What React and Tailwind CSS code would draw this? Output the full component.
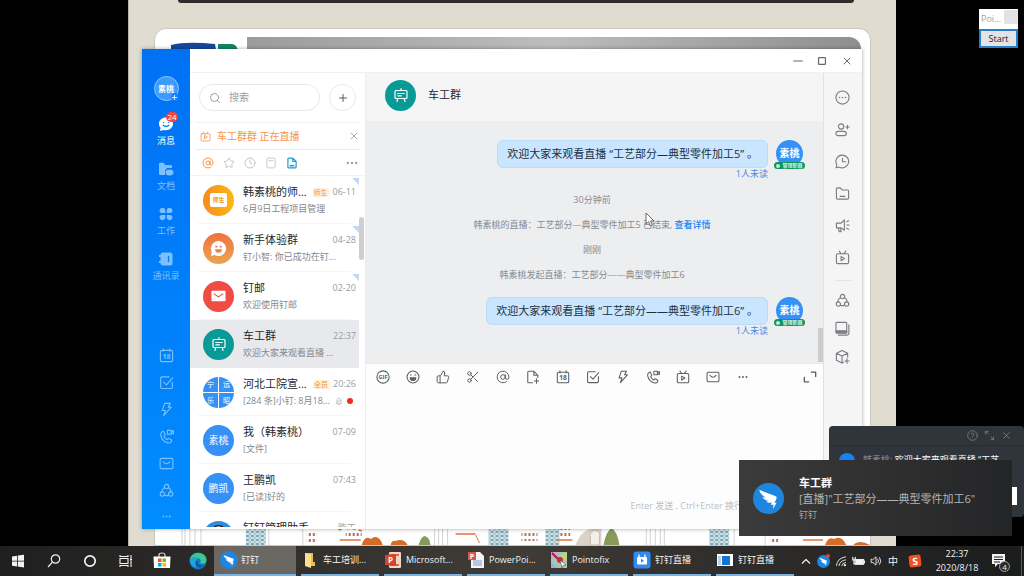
import { useState } from 'react'
import { AtSign, Clock, Ellipsis, Plus, Scissors, Search, Star, ThumbsUp, X } from 'lucide-react'

/**
 * Line icon on a 16 unit grid, drawn in the current text colour.
 */
function Glyph({ className = 'size-[14px]', children }) {
  return (
    <svg
      viewBox="0 0 16 16"
      className={className}
      fill="none"
      stroke="currentColor"
      strokeWidth="1.2"
      strokeLinecap="round"
      strokeLinejoin="round"
      aria-hidden="true"
    >
      {children}
    </svg>
  )
}

const LiveIcon = ({ className }) => (
  <Glyph className={className}>
    <rect x="1.5" y="4" width="13" height="10.5" rx="1.5" />
    <path d="M4.5 1.2 6.5 4M11.5 1.2 9.5 4M6.5 7v4.5L10.2 9.2z" />
  </Glyph>
)

const CalendarIcon = ({ className }) => (
  <Glyph className={className}>
    <rect x="1.5" y="2.5" width="13" height="12" rx="1.5" />
    <path d="M4.5 1v2.5M11.5 1v2.5" />
    <text x="8" y="11.6" fontSize="7.5" textAnchor="middle" fill="currentColor" stroke="none" fontWeight="700">
      18
    </text>
  </Glyph>
)

const CheckIcon = ({ className }) => (
  <Glyph className={className}>
    <path d="M10.5 2H3a1.2 1.2 0 0 0-1.2 1.2v10A1.2 1.2 0 0 0 3 14.4h10a1.2 1.2 0 0 0 1.2-1.2V7.5" />
    <path d="M5 7.5 8 10.5 14.5 3" />
  </Glyph>
)

const BoltIcon = ({ className }) => (
  <Glyph className={className}>
    <path d="M6 1.5h6L9.8 5.5H13L5 14.5l1.8-5.500H3.500z" />
  </Glyph>
)

const PhoneIcon = ({ className }) => (
  <Glyph className={className}>
    <path d="M4 2.500c-1.500.7-2.500 2.200-2 4.500 1 4.300 4.500 7 7.500 7.800 2 .4 3.500-.6 4-2 .2-.6 0-1-.5-1.300l-2-1.200c-.6-.3-1-.1-1.400.3l-.7.8C7 10.500 5.800 9 5.300 7.600l.8-.8c.4-.4.5-.9.2-1.400L5.200 3C4.900 2.500 4.500 2.300 4 2.500z" />
    <path d="M9 1.500h4v4H9zM13 3l2.300-1.200v3.400L13 4" />
  </Glyph>
)

const MailIcon = ({ className }) => (
  <Glyph className={className}>
    <rect x="1.2" y="2.5" width="13.6" height="11" rx="1.5" />
    <path d="M4.500 6.200Q8 10.200 11.500 6.200" />
  </Glyph>
)

const TrioIcon = ({ className }) => (
  <Glyph className={className}>
    <circle cx="8" cy="3.8" r="2.3" />
    <circle cx="3.6" cy="11.8" r="2.3" />
    <circle cx="12.4" cy="11.8" r="2.3" />
    <path d="M5.600 5C3.800 6 3 7.500 3 9.300M10.400 5c1.800 1 2.600 2.500 2.600 4.300M6 13q2 1 4 0" />
  </Glyph>
)

const DotsIcon = ({ className }) => (
  <svg viewBox="0 0 16 16" className={className} fill="currentColor" aria-hidden="true">
    <circle cx="4" cy="8" r="1.1" />
    <circle cx="8" cy="8" r="1.1" />
    <circle cx="12" cy="8" r="1.1" />
  </svg>
)

const GifIcon = ({ className }) => (
  <Glyph className={className}>
    <circle cx="8" cy="8" r="7" />
    <text x="8" y="10.4" fontSize="6.5" textAnchor="middle" fill="currentColor" stroke="none" fontWeight="700">
      GIF
    </text>
  </Glyph>
)

const LaughIcon = ({ className }) => (
  <Glyph className={className}>
    <circle cx="8" cy="8" r="6.8" />
    <path d="M4.800 8.800h6.400a3.200 3.200 0 0 1-6.400 0z" fill="currentColor" />
    <path d="M5.500 5.200v.8M10.500 5.200v.8" />
  </Glyph>
)

const FileAddIcon = ({ className }) => (
  <Glyph className={className}>
    <path d="M7.500 14.500H3.200A1.200 1.200 0 0 1 2 13.300V2.700a1.200 1.200 0 0 1 1.200-1.200H9L13.500 6v2.500M9 1.500V6h4.500M12 10v5M9.500 12.500h5" />
  </Glyph>
)

const CardIcon = ({ className }) => (
  <Glyph className={className}>
    <rect x="2.5" y="1.5" width="11" height="13" rx="1.5" />
    <path d="M5 5h6" />
  </Glyph>
)

const DocIcon = ({ className }) => (
  <Glyph className={className}>
    <path d="M2.500 2.700a1.200 1.200 0 0 1 1.200-1.200H9L13.500 6v7.300a1.200 1.200 0 0 1-1.200 1.200H3.700a1.200 1.200 0 0 1-1.200-1.200zM9 1.500V6h4.500" strokeWidth="1.6" />
    <path d="M5.500 11.500h5" strokeWidth="2" />
  </Glyph>
)

const MuteIcon = ({ className }) => (
  <Glyph className={className}>
    <path d="M4 11V6.500a4 4 0 0 1 8 0V11l1.500 1.500h-11zM6.500 15h3M5 8h6" strokeWidth="1.600" />
  </Glyph>
)

const ExpandIcon = ({ className }) => (
  <Glyph className={className}>
    <path d="M9.500 2.500h5v5M1.500 8.500v5h5" strokeWidth="1.500" />
  </Glyph>
)

const EaselIcon = ({ className }) => (
  <Glyph className={className}>
    <rect x="2" y="3.5" width="12" height="8" rx="1" />
    <path d="M8 1.500v2M4.800 6.500h6.400M4.800 8.800h3.500M4.800 11.500 4 14.500M11.200 11.500l.8 3" />
  </Glyph>
)

const BirdIcon = ({ className }) => (
  <svg viewBox="0 0 32 32" className={className} aria-hidden="true">
    <circle cx="16" cy="16" r="16" fill="#1f86e0" />
    <path
      d="M6.500 7c5 2.500 11 4 16.500 6.500 1.700.8 1.700 2 .8 3.700l-1.800 3.300h2.300L20.500 27l.7-4.500h-3l1.200-2.300c-2.400.4-4.400.1-6-1.200 1.200.1 2.200 0 3-.3-3.300-.7-5.500-2-6.800-4.200 1.200.4 2.500.6 3.600.5C9.500 13 7 10.300 6.500 7z"
      fill="#fff"
    />
  </svg>
)

const navItems = [
  { label: '消息', icon: 'chat', active: true },
  { label: '文档', icon: 'docs' },
  { label: '工作', icon: 'work' },
  { label: '通讯录', icon: 'book' },
]

const railTools = [
  { label: '日历', Icon: CalendarIcon },
  { label: '待办', Icon: CheckIcon },
  { label: 'DING', Icon: BoltIcon },
  { label: '电话', Icon: PhoneIcon },
  { label: '邮箱', Icon: MailIcon },
  { label: '圈子', Icon: TrioIcon },
]

const conversations = [
  { id: 1, name: '韩素桃的师...', tag: '师生', time: '06-11', text: '6月9日工程项目管理', avatar: 'class', corner: true },
  { id: 2, name: '新手体验群', time: '04-28', text: '钉小智: 你已成功在钉...', avatar: 'smile', corner: true },
  { id: 3, name: '钉邮', time: '02-20', text: '欢迎使用钉邮', avatar: 'mail', corner: true },
  { id: 4, name: '车工群', time: '22:37', text: '欢迎大家来观看直播 ...', avatar: 'easel' },
  { id: 5, name: '河北工院宣...', tag: '全员', time: '20:26', text: '[284 条]小钉: 8月18...', avatar: 'grid', unread: true },
  { id: 6, name: '我（韩素桃）', time: '07-09', text: '[文件]', avatar: '素桃' },
  { id: 7, name: '王鹏凯', time: '07:43', text: '[已读]好的', avatar: '鹏凯' },
  { id: 8, name: '钉钉管理助手', time: '昨天', text: '', avatar: 'helper' },
]

const editorTools = [
  { label: 'GIF表情', Icon: GifIcon },
  { label: '表情', Icon: LaughIcon },
  { label: '点赞', Icon: ThumbsUp },
  { label: '截图', Icon: Scissors },
  { label: '提及', Icon: AtSign },
  { label: '文件', Icon: FileAddIcon },
  { label: '日程', Icon: CalendarIcon },
  { label: '任务', Icon: CheckIcon },
  { label: 'DING', Icon: BoltIcon },
  { label: '通话', Icon: PhoneIcon },
  { label: '直播', Icon: LiveIcon },
  { label: '邮件', Icon: MailIcon },
  { label: '更多', Icon: DotsIcon },
]

const tasks = [
  { id: 'ding', label: '钉钉', icon: 'ding', active: true },
  { id: 'folder', label: '车工培训...', icon: 'folder' },
  { id: 'ppt', label: 'Microsoft...', icon: 'ppt' },
  { id: 'ppt2', label: 'PowerPoi...', icon: 'ppt2' },
  { id: 'pointofix', label: 'Pointofix', icon: 'pointofix' },
  { id: 'live', label: '钉钉直播', icon: 'live' },
  { id: 'live2', label: '钉钉直播', icon: 'window' },
]

function NavIcon({ name }) {
  return (
    <svg viewBox="0 0 16 16" className="size-4" fill="currentColor" aria-hidden="true">
      {name === 'chat' && (
        <>
          <path d="M8 1.500c4 0 7 2.700 7 6.300s-3 6.400-7 6.400c-.8 0-1.600-.1-2.300-.3L2 15l.6-3A6 6 0 0 1 1 7.800C1 4.200 4 1.500 8 1.500z" />
          <path d="M4.800 9q3.200 2.800 6.400 0" fill="none" stroke="#007bfb" strokeWidth="1.200" />
          <path d="M5.500 6v1M10.500 6v1" stroke="#007bfb" strokeWidth="1.200" />
        </>
      )}
      {name === 'docs' && (
        <>
          <path d="M1 3a1.300 1.300 0 0 1 1.300-1.300h3.200L7.300 4h5.400A1.300 1.300 0 0 1 14 5.300V7H9L7 9.500V14H2.300A1.300 1.300 0 0 1 1 12.700z" />
          <ellipse cx="11.500" cy="11.500" rx="4" ry="3" />
        </>
      )}
      {name === 'work' && (
        <>
          <path d="M1.500 4.200a3 3 0 0 1 5.800-.2v3H4.500a2.800 2.800 0 0 1-3-2.800zM14.500 4.200a3 3 0 0 0-5.800-.2v3h2.800a2.800 2.800 0 0 0 3-2.800z" />
          <path d="M1.500 11.800a3 3 0 0 0 5.800.2V9H4.500a2.800 2.800 0 0 0-3 2.800zM14.500 11.800a3 3 0 0 1-5.800.2V9h2.800a2.800 2.800 0 0 1 3 2.800z" />
        </>
      )}
      {name === 'book' && (
        <>
          <rect x="2.5" y="1.5" width="12" height="13" rx="2.5" />
          <path d="M1 5h3M1 11h3" stroke="currentColor" strokeWidth="1.800" />
          <path d="M10.500 5v6" stroke="#007bfb" strokeWidth="1.300" />
        </>
      )}
    </svg>
  )
}

function SideRail() {
  return (
    <nav className="flex w-12 shrink-0 flex-col items-center bg-gradient-to-b from-[#0071f5] to-[#008cff] pt-[27px] pb-[6px] text-[#7cc0ff]">
      <div className="relative flex size-[25px] items-center justify-center rounded-full border border-[#8cc6ff] bg-[#3c9bfb] text-[8px] font-bold text-white">
        素桃
        <span className="absolute -right-px -bottom-px flex size-2 items-center justify-center rounded-full bg-[#1683f8]">
          <Plus className="size-[7px]" strokeWidth={3} />
        </span>
      </div>
      <div className="mt-[15px] flex flex-col gap-[14px]">
        {navItems.map((item) => (
          <button
            key={item.label}
            type="button"
            className={
              item.active
                ? 'relative flex flex-col items-center gap-[3px] text-white'
                : 'relative flex flex-col items-center gap-[3px]'
            }
          >
            <NavIcon name={item.icon} />
            <span className="text-[9px] leading-[12px]">{item.label}</span>
            {item.active && (
              <span className="absolute -top-1 left-[14px] rounded-full bg-[#f4473c] px-px text-[8px] leading-[10px]">
                24
              </span>
            )}
          </button>
        ))}
      </div>
      <div className="mt-auto flex flex-col items-center gap-3">
        {railTools.map(({ label, Icon }) => (
          <button key={label} type="button" aria-label={label}>
            <Icon className="size-[15px]" />
          </button>
        ))}
        <button type="button" aria-label="更多">
          <DotsIcon className="size-[13px]" />
        </button>
      </div>
    </nav>
  )
}

function Avatar({ kind }) {
  const base = 'flex size-[31px] shrink-0 items-center justify-center overflow-hidden rounded-full text-white'

  if (kind === 'class') {
    return (
      <div className={`${base} bg-gradient-to-r from-[#f88a1c] to-[#fbb813]`}>
        <span className="rounded-[2px] bg-white px-[2px] text-[6px] leading-[14px] font-bold text-[#f59a1c]">师生</span>
      </div>
    )
  }
  if (kind === 'smile') {
    return (
      <div className={`${base} bg-gradient-to-b from-[#f2703d] to-[#e8a552]`}>
        <svg viewBox="0 0 16 16" className="size-[17px]" aria-hidden="true">
          <path d="M8 1a7 7 0 1 1-3.500 13L1 15l.6-4A7 7 0 0 1 8 1z" fill="#fff" />
          <path d="M4.800 8.800h6.400a3.200 3.200 0 0 1-6.400 0zM5 5.500h2v1.500H5zM9 5.500h2v1.500H9z" fill="#ee8047" />
        </svg>
      </div>
    )
  }
  if (kind === 'mail') {
    return (
      <div className={`${base} bg-[#f14c43]`}>
        <svg viewBox="0 0 16 12" className="h-3 w-[15px]" aria-hidden="true">
          <rect x="0.5" y="0.5" width="15" height="11" rx="0.8" fill="#fff" />
          <path d="M3 3.500 8 7l5-3.500" fill="none" stroke="#f14c43" strokeWidth="1.200" />
        </svg>
      </div>
    )
  }
  if (kind === 'easel') {
    return (
      <div className={`${base} bg-[#079a96]`}>
        <EaselIcon className="size-4" />
      </div>
    )
  }
  if (kind === 'grid') {
    return (
      <div className="grid size-[31px] shrink-0 grid-cols-2 gap-px overflow-hidden rounded-full text-center text-[7px] leading-[15px] text-white">
        {['宁', '远', '乐', '昭'].map((char) => (
          <span key={char} className="bg-[#3591f5]">
            {char}
          </span>
        ))}
      </div>
    )
  }
  if (kind === 'helper') {
    return (
      <div className={`${base} bg-[#2e8de0]`}>
        <svg viewBox="0 0 32 32" className="size-full" aria-hidden="true">
          <path d="M7 14C7 1 25 1 25 14v9H7z" fill="#1d2633" />
          <circle cx="16" cy="12" r="6.500" fill="#f0c9a8" />
        </svg>
      </div>
    )
  }
  return <div className={`${base} bg-[#3591f5] text-[10px]`}>{kind}</div>
}

function ConversationRow({ item, selected, onSelect }) {
  return (
    <li>
      <button
        type="button"
        onClick={onSelect}
        className={
          selected
            ? 'relative flex h-12 w-full items-center gap-[9px] bg-[#e8e9ed] pr-[3px] pl-[13px] text-left'
            : 'relative flex h-12 w-full items-center gap-[9px] pr-[3px] pl-[13px] text-left'
        }
      >
        <Avatar kind={item.avatar} />
        <div className="min-w-0 flex-1">
          <div className="flex items-center gap-1">
            <span className="flex-1 text-[11px] leading-[18px] whitespace-nowrap text-[#23272e]">{item.name}</span>
            {item.tag && (
              <span className="rounded-[2px] bg-[#fff0dc] px-px text-[7px] leading-[9px] text-[#f79433]">{item.tag}</span>
            )}
            <span className="text-[9px] leading-[16px] text-[#999ca1]">{item.time}</span>
          </div>
          <div className="flex min-h-4 items-center gap-1 text-[9px] leading-[16px] text-[#85888d]">
            <span className="flex-1 whitespace-nowrap">{item.text}</span>
            {item.unread && (
              <>
                <MuteIcon className="size-[8px] text-[#b5b7ba]" />
                <span className="mr-[3px] size-[6px] rounded-full bg-[#ee2d1d]" />
              </>
            )}
          </div>
        </div>
        {item.corner && (
          <svg viewBox="0 0 7 7" className="absolute top-[2px] right-0 size-[7px]" aria-hidden="true">
            <path d="M0 0h7v7z" fill="#c3d6f3" />
          </svg>
        )}
        {!selected && <span className="absolute right-2 bottom-0 left-2 h-px bg-[#f4f5f6]" />}
      </button>
    </li>
  )
}

function ConversationPanel() {
  const [selectedId, setSelectedId] = useState(4)

  return (
    <section className="flex w-44 shrink-0 flex-col overflow-hidden border-r border-[#ececee] bg-white pb-[2px]">
      <div className="flex items-center gap-[9px] px-[9px] py-[11px]">
        <label className="flex h-[27px] w-[122px] items-center gap-2 rounded-full border border-[#e6e7e8] px-[9px] text-[#9a9da1]">
          <Search className="size-3 shrink-0" strokeWidth={2} />
          <input
            type="text"
            aria-label="搜索"
            placeholder="搜索"
            className="w-full min-w-0 bg-transparent text-[10px] outline-none placeholder:text-[#9a9da1]"
          />
        </label>
        <button
          type="button"
          aria-label="添加"
          className="flex size-[27px] shrink-0 items-center justify-center rounded-full border border-[#e6e7e8] text-[#55585c]"
        >
          <Plus className="size-3" strokeWidth={2} />
        </button>
      </div>

      <div className="mx-[5px] flex h-7 shrink-0 items-center gap-[6px] border-t border-b border-t-[#f3f3f4] border-b-[#ececee] pl-[5px] text-[#f5954a]">
        <LiveIcon className="size-[11px]" />
        <span className="flex-1 text-[10px]">车工群群 正在直播</span>
        <button type="button" aria-label="关闭" className="text-[#a5a7aa]">
          <X className="size-3" strokeWidth={2} />
        </button>
      </div>

      <div className="flex h-[26px] shrink-0 items-center gap-[9px] border-b border-[#f1f2f3] pr-[6px] pl-3 text-[#c4c6c9]">
        <AtSign className="size-3 text-[#f5954a]" strokeWidth={2} />
        <Star className="size-3" strokeWidth={2} />
        <Clock className="size-3" strokeWidth={2} />
        <CardIcon className="size-3" />
        <DocIcon className="size-3 text-[#1e9bd8]" />
        <Ellipsis className="ml-auto size-[14px] text-[#9a9da1]" strokeWidth={2} />
      </div>

      <div className="relative min-h-0 flex-1 overflow-hidden">
        <ul className="mr-[6px]">
          {conversations.map((item) => (
            <ConversationRow
              key={item.id}
              item={item}
              selected={item.id === selectedId}
              onSelect={() => setSelectedId(item.id)}
            />
          ))}
        </ul>
        <span className="absolute top-[41px] right-px h-[43px] w-[5px] rounded-sm bg-[#cdced0]" />
      </div>
    </section>
  )
}

function SentMessage({ children }) {
  return (
    <div className="flex justify-end gap-2 pr-[15px]">
      <div className="flex flex-col items-end">
        <p className="rounded-md border border-[#b9dcf7] bg-[#c9e5ff] px-[9px] text-[11px] leading-[26px] text-[#20303f]">
          {children}
        </p>
        <span className="text-[9px] leading-[12px] text-[#3c8bea]">1人未读</span>
      </div>
      <div className="relative flex size-[27px] items-center justify-center rounded-full bg-[#3591f5] text-[10px] font-bold text-white">
        素桃
        <span className="absolute -right-[2px] -bottom-[2px] -left-[2px] flex h-[7px] items-center justify-center gap-[2px] rounded-full bg-[#14935f] text-[5px] text-[#d5f3e4]">
          <i className="size-[4px] rounded-full bg-[#bff0d6]" />
          管理职器
        </span>
      </div>
    </div>
  )
}

function ChatPanel() {
  const [draft, setDraft] = useState('')

  return (
    <section className="flex min-w-0 flex-1 flex-col">
      <header className="flex h-12 shrink-0 items-center gap-3 bg-[#f5f5f6] pb-1 pl-[19px]">
        <Avatar kind="easel" />
        <h1 className="text-[11px] text-[#23272e]">车工群</h1>
      </header>

      <div className="relative min-h-0 flex-1 overflow-hidden bg-[#eceef0] pt-[19px] pr-[5px]">
        <SentMessage>欢迎大家来观看直播 “工艺部分—典型零件加工5” 。</SentMessage>
        <div className="mt-[14px] mb-4 flex flex-col items-center gap-[13px] text-[9px] leading-[12px] text-[#888b90]">
          <time>30分钟前</time>
          <p>
            韩素桃的直播：工艺部分—典型零件加工5 已结束,{' '}
            <a href="#live" className="font-medium text-[#1486ee]">
              查看详情
            </a>
          </p>
          <time>刚刚</time>
          <p>韩素桃发起直播：工艺部分——典型零件加工6</p>
        </div>
        <SentMessage>欢迎大家来观看直播 “工艺部分——典型零件加工6” 。</SentMessage>
        <span className="absolute right-0 bottom-px h-[34px] w-[5px] bg-[#cacbcd]" />
      </div>

      <div className="flex h-[166px] shrink-0 flex-col border-t border-[#e8e9ea] bg-[#fdfdfd]">
        <div className="flex h-[25px] shrink-0 items-center gap-4 pr-[6px] pl-[10px] text-[#5c6066]">
          {editorTools.map(({ label, Icon }) => (
            <button key={label} type="button" aria-label={label}>
              <Icon className="size-[14px]" strokeWidth={1.7} />
            </button>
          ))}
          <button type="button" aria-label="展开" className="ml-auto">
            <ExpandIcon className="size-[14px]" />
          </button>
        </div>
        <textarea
          aria-label="输入消息"
          value={draft}
          onChange={(e) => setDraft(e.target.value)}
          className="min-h-0 w-full flex-1 resize-none bg-transparent px-3 text-[11px] outline-none"
        />
        <p className="pr-20 pb-4 text-right text-[9px] leading-[14px] text-[#bcbec1]">Enter 发送 , Ctrl+Enter 换行</p>
      </div>
    </section>
  )
}

function ToolRail() {
  return (
    <aside className="flex w-[39px] shrink-0 flex-col items-center gap-[17px] border-l border-[#e0e1e3] bg-[#f5f5f6] pt-[17px] pr-px text-[#7a7d82]">
      <Glyph className="size-[15px]">
        <circle cx="8" cy="8" r="7" />
        <path d="M4.800 8h.1M8 8h.1M11.200 8h.1" strokeWidth="1.600" />
      </Glyph>
      <Glyph className="size-[15px]">
        <circle cx="6.5" cy="4.8" r="2.8" />
        <rect x="1" y="10" width="11" height="4.5" rx="2.2" />
        <path d="M13.300 3.500v3.600M11.500 5.300h3.600" />
      </Glyph>
      <Glyph className="size-[15px]">
        <path d="M8 1.200A6.800 6.800 0 1 1 4.600 14L1.200 14.700l.7-3.300A6.800 6.800 0 0 1 8 1.200zM8 4.500V8.300h3.500" />
      </Glyph>
      <Glyph className="size-[15px]">
        <path d="M1.500 3.200c0-.7.5-1.200 1.200-1.200h3l1.800 2.200h6c.6 0 1 .5 1 1.100v7.500c0 .7-.5 1.200-1.200 1.200H2.700c-.7 0-1.200-.5-1.200-1.200zM5.500 11h5" />
      </Glyph>
      <Glyph className="size-[15px]">
        <path d="M10 2v11L6.500 10.500H1.500v-5h5zM3.500 10.500 4.500 14.500h2l-.5-4M12.500 4l2-1M12.500 7.500H15M12.500 11l2 1" />
      </Glyph>
      <LiveIcon className="size-[15px]" />
      <hr className="-mt-[2px] w-4 border-[#e2e3e5]" />
      <div className="-mt-[5px] flex flex-col gap-[13px]">
        <TrioIcon className="size-[15px]" />
        <Glyph className="size-[15px]">
          <rect x="1" y="1.5" width="11.5" height="11.5" rx="1" />
          <path d="M1.500 10.500h10.500M3.500 15h9.300a2 2 0 0 0 2-2V4" />
          <path d="M1.500 11h11v1.500h-11z" fill="currentColor" />
        </Glyph>
        <Glyph className="size-[15px]">
          <path d="M9 14.300 7.500 15l-6-3V4.500l6-3 6 3V8.500M1.500 4.500l6 3 6-3M7.500 7.500V15M12.800 10.500v4.600M10.500 12.800h4.600" />
        </Glyph>
      </div>
    </aside>
  )
}

function DingTalkWindow() {
  return (
    <main className="absolute top-[49px] right-[162px] bottom-[17px] left-[142px] flex shadow-[0_0_4px_rgba(0,0,0,0.35)]">
      <SideRail />
      <div className="flex min-w-0 flex-1 flex-col">
        <div className="flex h-6 shrink-0 items-center justify-end gap-[14px] border-b border-[#f0f0f1] bg-white pr-[9px] text-[#66696d]">
          <button type="button" aria-label="最小化">
            <Glyph className="size-[10px]">
              <path d="M1 8h14" strokeWidth="1.600" />
            </Glyph>
          </button>
          <button type="button" aria-label="最大化">
            <Glyph className="size-[10px]">
              <rect x="2.5" y="2.5" width="11" height="11" rx="1" strokeWidth="2" />
            </Glyph>
          </button>
          <button type="button" aria-label="关闭窗口">
            <X className="size-3" strokeWidth={2} />
          </button>
        </div>
        <div className="flex min-h-0 flex-1">
          <ConversationPanel />
          <ChatPanel />
          <ToolRail />
        </div>
      </div>
    </main>
  )
}

// Row of little houses along the foot of the slide.
function Skyline() {
  return (
    <svg
      viewBox="154 528 716 18"
      preserveAspectRatio="none"
      className="absolute bottom-0 left-0 h-[18px] w-full"
      aria-hidden="true"
    >
      <defs>
        <pattern id="tiles" width="5" height="4" patternUnits="userSpaceOnUse">
          <rect width="5" height="4" fill="#d3e2e6" />
          <rect width="3" height="2" fill="#79a9b8" />
          <rect x="3" y="2" width="2" height="2" fill="#a6c5cd" />
        </pattern>
        <pattern id="bricks" width="4" height="6" patternUnits="userSpaceOnUse">
          <rect width="2" height="3" fill="#b0705c" />
        </pattern>
      </defs>
      <path
        d="M181 528v18M184 528v18M189 528v18M194 528v18M200 528v18M268 528v18M302 528v18M434 528v18M438 528v18M442 528v18M447 528v18M646 528v18M650 528v18M655 528v18M660 528v18M664 528v18M734 528v18M765 528v18"
        stroke="#d3d3d3"
        strokeWidth="1"
      />
      <g fill="url(#tiles)">
        <rect x="245" y="528" width="20" height="18" />
        <rect x="488" y="528" width="20" height="18" />
        <rect x="545" y="528" width="14" height="18" />
        <rect x="709" y="528" width="20" height="18" />
      </g>
      <g fill="url(#bricks)">
        <rect x="306" y="534" width="10" height="12" />
        <rect x="345" y="533" width="16" height="5" />
        <rect x="521" y="533" width="16" height="9" />
        <rect x="558" y="529" width="12" height="8" />
        <rect x="770" y="535" width="9" height="10" />
      </g>
      <path d="M338 531l3-1M345 529l3 1M352 530h3M358 531l3 1" stroke="#e4733a" strokeWidth="1.500" />
      <path d="M339 541h21M455 535h20M556 541h16M803 541h20" stroke="#e4733a" strokeWidth="1.500" />
      <path
        d="M361 546q3-10 9-6 8-6 12 6zM390 546q1-5 5-4 8-3 12 4zM825 546q3-9 9-6 8-4 12 6zM853 546q6-6 17 0z"
        fill="#d56c28"
      />
      <path d="M475 536l4 8" stroke="#e4733a" />
      <path d="M575 546q8-20 26-16v16z" fill="#d9d3c8" />
      <path d="M590 546v-7q-2-6 5-8 6 2 4 8v7z" fill="#f4efe8" stroke="#c9b9a8" />
      <path d="M603 546q3-14 8-17 6 3 8 17zM418 546q2-8 6-9 5 1 6 9z" fill="#87995b" />
    </svg>
  )
}

function Slide() {
  return (
    <div className="absolute inset-y-0 right-[12.5%] left-[12.5%] overflow-hidden border-l border-[#b9b5aa] bg-[#e0ddd0]">
      <div className="mr-[42px] ml-[49px] h-[3px] rounded-b-sm bg-[#2e2c2b]" />
      <div className="absolute top-7 right-[25px] bottom-0 left-[25px] overflow-hidden rounded-t-xl border border-[#c9c6bc] bg-white">
        <div className="mt-2 mr-[9px] ml-[92px] h-4 rounded-tr-xl bg-gradient-to-r from-[#9c9c9c] via-[#bdbdbd] to-[#8f8f8f]" />
        <svg viewBox="0 0 68 8" className="absolute top-[13px] left-[16px] h-2 w-[68px]" aria-hidden="true">
          <path d="M0 8V3Q15-1 44 2l1 6z" fill="#17479b" />
          <path d="M47 2h14q4 0 6 6H47z" fill="#138764" />
        </svg>
        <Skyline />
      </div>
    </div>
  )
}

function PointofixPanel() {
  return (
    <div className="absolute top-[9px] right-[6px] w-[39px] bg-white">
      <div className="flex h-5 items-center justify-between pl-[2px] text-[9px] text-[#a3a3a3]">
        Poi...
        <span className="mb-1 h-[14px] w-[14px] bg-[#e3e3e3]" />
      </div>
      <button
        type="button"
        className="block h-[19px] w-full border-2 border-[#2a7fcb] bg-[#e4e4e6] text-[9px] leading-[14px] text-[#222]"
      >
        Start
      </button>
    </div>
  )
}

function LivePopup() {
  return (
    <section className="absolute right-0 bottom-[29px] h-[91px] w-[195px] overflow-hidden rounded-[4px] bg-[#30343b]">
      <div className="flex h-5 items-center justify-end gap-[6px] border-b border-[#292c32] pr-3 text-[#7b7f86]">
        <Glyph className="size-[11px]">
          <circle cx="8" cy="8" r="7" />
          <path d="M6 6.300a2 2 0 1 1 2.600 2c-.5.2-.6.5-.6 1M8 11.800v.1" />
        </Glyph>
        <Glyph className="size-[11px]">
          <path d="M2 6V2h4M2 2l4 4M14 10v4h-4M14 14l-4-4" />
        </Glyph>
        <X className="size-[11px]" />
      </div>
      <div className="flex items-start gap-2 pt-[7px] pl-[10px]">
        <span className="size-4 shrink-0 rounded-full bg-[#1583f0]" />
        <p className="text-[9px] leading-[14px] whitespace-nowrap text-white">
          <span className="text-[#8b8f96]">韩素桃: </span>
          欢迎大家来观看直播 “工艺
        </p>
      </div>
      <span className="absolute right-[7px] bottom-3 h-[18px] w-4 bg-white" />
    </section>
  )
}

function Toast() {
  return (
    <section className="absolute right-3 bottom-[10px] flex h-[76px] w-[273px] items-center gap-[15px] bg-gradient-to-r from-[#3b3b3b] via-[#303030] to-[#242527] pl-[14px] text-white">
      <BirdIcon className="size-[31px] shrink-0" />
      <div>
        <h2 className="text-[11px] leading-[15px] font-bold">车工群</h2>
        <p className="text-[11px] leading-[17px] text-[#b5b5b5]">[直播]"工艺部分——典型零件加工6"</p>
        <p className="text-[9px] leading-[15px] text-[#a5a5a5]">钉钉</p>
      </div>
    </section>
  )
}

function TaskIcon({ name }) {
  if (name === 'ding') return <BirdIcon className="size-[18px]" />

  return (
    <svg viewBox="0 0 18 18" className="size-[18px]" aria-hidden="true">
      {name === 'folder' && (
        <>
          <path d="M4 2h8v13H4z" fill="#e9bd52" />
          <path d="M4 2l6 1.500V17l-6-2z" fill="#fbe08f" />
          <path d="M12 11h2v4h-2z" fill="#e9bd52" />
        </>
      )}
      {name === 'ppt' && (
        <>
          <rect x="5" y="1" width="12" height="16" rx="1" fill="#f5d4c8" />
          <path d="M6 4h9M6 14h9" stroke="#d24726" strokeWidth="1.500" />
          <path d="M1 4l11-1v12L1 14z" fill="#d24726" />
          <text x="6.5" y="12" fontSize="8" fontWeight="700" textAnchor="middle" fill="#fff">
            P
          </text>
        </>
      )}
      {name === 'ppt2' && (
        <>
          <path d="M4 1h9l4 4v12H4z" fill="#f3f3f8" />
          <rect x="6" y="9" width="9" height="6" fill="#b9c5e2" />
          <rect x="1" y="1" width="8" height="8" fill="#d35a45" />
          <text x="5" y="7.5" fontSize="7" fontWeight="700" textAnchor="middle" fill="#fff">
            P
          </text>
        </>
      )}
      {name === 'pointofix' && (
        <>
          <rect x="1" y="1" width="16" height="16" fill="#a9c6b0" />
          <path d="M1 1h9L1 9z" fill="#d9a1c8" />
          <path d="M17 1v9L10 5z" fill="#b9d977" />
          <path d="M1 17V11l7 6z" fill="#8cb3e6" />
          <path d="M2 2 12 12" stroke="#a3195b" strokeWidth="2" />
          <circle cx="10" cy="9" r="3" fill="#d42a3a" />
          <path d="M10 9l6 5-3 .5L12 17z" fill="#fff" stroke="#333" strokeWidth="0.500" />
        </>
      )}
      {name === 'live' && (
        <>
          <rect x="0.5" y="0.5" width="17" height="17" rx="3" fill="#2f8af5" />
          <path d="M5 6h8a1 1 0 0 1 1 1v5.500a1 1 0 0 1-1 1H5a1 1 0 0 1-1-1V7a1 1 0 0 1 1-1z" fill="#fff" />
          <path d="M6 3.500v3M12 3.500v3" stroke="#fff" strokeWidth="1.300" />
          <path d="M8 7.800v4l3-2z" fill="#2f8af5" />
        </>
      )}
      {name === 'window' && (
        <>
          <rect x="1" y="3" width="16" height="12" fill="#fff" />
          <rect x="2" y="5" width="3" height="9" fill="#b9cfe6" />
          <rect x="6" y="5" width="8" height="9" fill="#1775cf" />
        </>
      )}
    </svg>
  )
}

function Taskbar() {
  return (
    <footer className="flex h-[30px] shrink-0 bg-gradient-to-r from-[#1f1f1f] via-[#403c37] to-[#1b1c1d] text-[#f2f2f2]">
      <div className="flex items-center gap-[18px] pr-[7px] pl-[9px]">
        <button type="button" aria-label="开始">
          <svg viewBox="0 0 18 18" className="size-[18px]" fill="currentColor">
            <path d="M3 4.500l5-.8v5H3zM8.800 3.600 15 2.700v6H8.800zM3 9.500h5v5l-5-.8zM8.800 9.500H15v6l-6.200-.9z" />
          </svg>
        </button>
        <button type="button" aria-label="搜索任务">
          <svg viewBox="0 0 18 18" className="size-[18px]" fill="none" stroke="currentColor" strokeWidth="1.2">
            <circle cx="10.5" cy="7" r="4.2" />
            <path d="M7.500 10.200 3 15" />
          </svg>
        </button>
        <button type="button" aria-label="小娜">
          <svg viewBox="0 0 18 18" className="size-[18px]" fill="none" stroke="currentColor" strokeWidth="1.7">
            <circle cx="9" cy="9" r="5.2" />
          </svg>
        </button>
        <button type="button" aria-label="任务视图">
          <svg viewBox="0 0 18 18" className="size-[18px]" fill="none" stroke="currentColor" strokeWidth="1.1">
            <path d="M3 3v1.500h8V3M3 15v-1.500h8V15M3 6.500h8v5H3zM14 3v3M14 9v6" />
            <path d="M13 7.500h2" strokeWidth="2" />
          </svg>
        </button>
        <button type="button" aria-label="商店">
          <svg viewBox="0 0 18 18" className="size-[18px]">
            <path d="M6 5V3q0-2 3-2t3 2v2" fill="none" stroke="#d8d8d8" strokeWidth="1.200" />
            <path d="M0.500 4.500h17L17 16H1z" fill="#fff" />
            <path d="M5 6.500h3.500V10H5z" fill="#f25022" />
            <path d="M9.500 6.500H13V10H9.500z" fill="#7fba00" />
            <path d="M5 11h3.500v3.500H5z" fill="#00a4ef" />
            <path d="M9.500 11H13v3.500H9.500z" fill="#ffb900" />
          </svg>
        </button>
        <button type="button" aria-label="Edge">
          <svg viewBox="0 0 18 18" className="size-[18px]">
            <circle cx="9" cy="9" r="8.5" fill="#1377c9" />
            <path d="M1 7C3-1 17-1 17.500 8c0 4-5 4.500-6.500 3 1.500-2 .5-5-3-5-3 0-6 1-7 1z" fill="#3cc88f" />
            <path d="M1 7c3-3 8-2 8.500 0C6 7 5 12 9 15c-4 1-9-2-8-8z" fill="#22a3dc" />
            <path d="M8.500 8.500c-1.500 3 2 6 6 4.500-2 3-6 3-7.500.5-.8-1.500-.3-4 1.500-5z" fill="#0d4f9e" />
          </svg>
        </button>
      </div>

      <div className="flex">
        {tasks.map((task) => (
          <button
            key={task.id}
            type="button"
            className={
              task.active
                ? 'flex w-[82px] items-center gap-[3px] border-b-2 border-[#76b4e6] bg-[#6b6762] pl-[6px]'
                : 'ml-[5px] flex w-[78px] items-center gap-1 border-b-2 border-[#76b4e6]'
            }
          >
            <TaskIcon name={task.icon} />
            <span className="text-[9px] whitespace-nowrap">{task.label}</span>
          </button>
        ))}
      </div>

      <div className="ml-auto flex items-center gap-[5px]">
        <Glyph className="size-[12px]">
          <path d="M3 11l5-5 5 5" strokeWidth="1.500" />
        </Glyph>
        <span className="relative">
          <BirdIcon className="size-[13px]" />
          <i className="absolute -top-px right-0 size-1 rounded-full bg-[#e5413a]" />
        </span>
        <Glyph className="size-[12px]">
          <path d="M2 14Q3 4 14 2.500M5.500 14Q6.500 7.500 14 6.500M9 14q1-3.500 5-4" />
          <circle cx="13" cy="13.5" r="1" fill="currentColor" />
        </Glyph>
        <Glyph className="size-[13px]">
          <rect x="4.5" y="5.5" width="10" height="6" fill="currentColor" />
          <path d="M1 3v3h3V3M2.500 6v5h2M15.500 7.500v2" strokeWidth="1.500" />
        </Glyph>
        <Glyph className="size-[12px]">
          <path d="M1.500 6v4h2.500l4 3.500v-11L4 6zM10.500 5.500q2 2.500 0 5M12.800 3.500q3.500 4.500 0 9" />
        </Glyph>
        <span className="pl-px text-[10px]">中</span>
        <span className="ml-[6px] flex size-3 -rotate-6 items-center justify-center rounded-[2px] bg-[#f0501e] text-[10px] leading-none font-bold text-white">
          S
        </span>
        <div className="ml-2 w-[46px] text-center text-[9px] leading-[14px]">
          <div>22:37</div>
          <div>2020/8/18</div>
        </div>
        <button type="button" aria-label="通知" className="relative mr-[9px] ml-[6px]">
          <svg viewBox="0 0 16 16" className="size-4" fill="currentColor">
            <path d="M1 1h13v10H7l-3 3v-3H1z" />
            <path d="M3 4h9M3 6.500h9M3 9h6" stroke="#1d1d1d" strokeWidth="1" />
          </svg>
          <span className="absolute -right-[3px] -bottom-[3px] flex size-[11px] items-center justify-center rounded-full border border-[#a5a5a5] bg-[#2b2b2b] text-[8px]">
            4
          </span>
        </button>
        <span className="mr-[2px] h-[30px] w-px bg-[#5a5a5a]" />
      </div>
    </footer>
  )
}

export default function App() {
  return (
    <div className="flex h-screen flex-col overflow-hidden bg-black font-['Open_Sans','Noto_Sans_CJK_SC',sans-serif]">
      <div className="relative min-h-0 flex-1">
        <Slide />
        <DingTalkWindow />
        <PointofixPanel />
        <LivePopup />
        <Toast />
        <svg viewBox="0 0 10 15" className="absolute top-[212px] left-[645px] h-[15px] w-[10px]" aria-hidden="true">
          <path d="M1 1v11l2.600-2.300L5.300 14l2-1-1.800-4H9z" fill="#fff" stroke="#555" strokeWidth="0.900" />
        </svg>
      </div>
      <Taskbar />
    </div>
  )
}
